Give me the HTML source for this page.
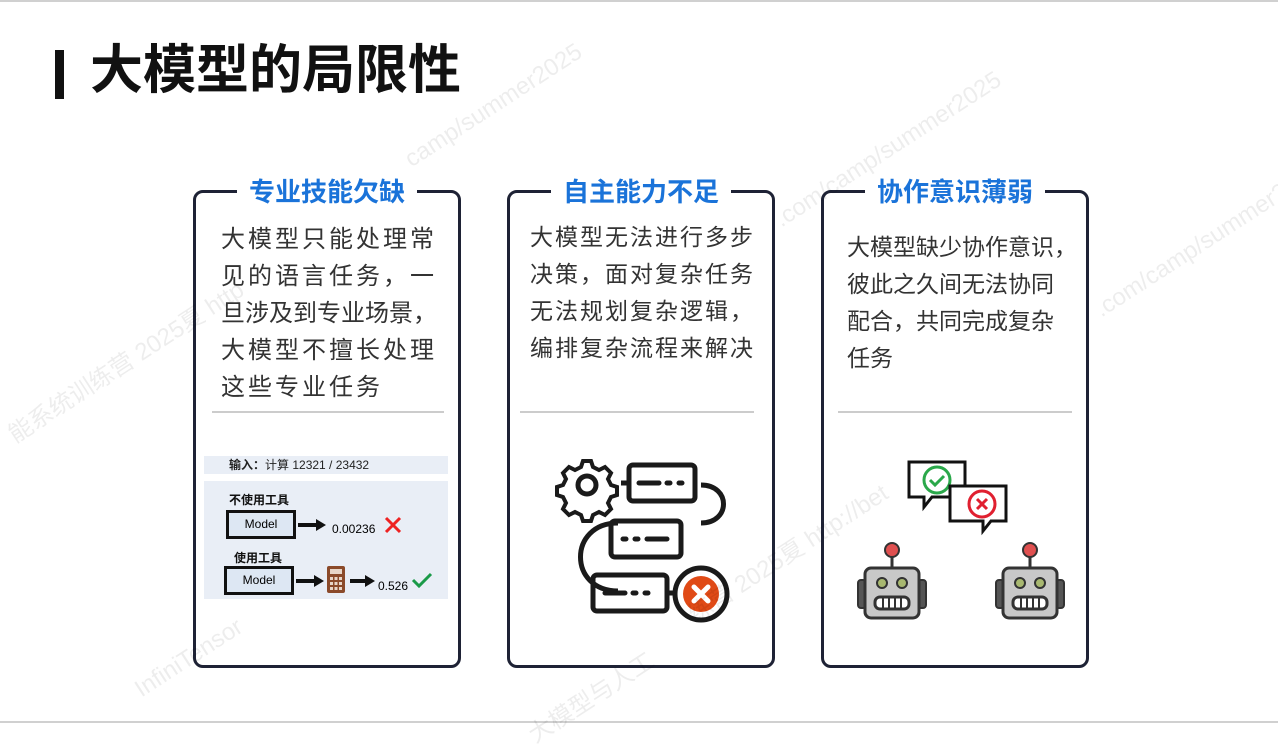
<!DOCTYPE html>
<html><head><meta charset="utf-8"><style>
body{margin:0;width:1278px;height:724px;background:#fff;position:relative;overflow:hidden;font-family:"Liberation Sans","Noto Sans CJK SC",sans-serif;}
.top{position:absolute;left:0;top:0;width:1278px;height:2px;background:#d0d0d0}
.bot{position:absolute;left:0;top:721px;width:1278px;height:2px;background:#d0d0d0}
.bar{position:absolute;left:55px;top:50px;width:9px;height:49px;background:#111}
h1{position:absolute;left:90px;top:40px;margin:0;font-size:53px;font-weight:bold;color:#111;line-height:62px;white-space:nowrap}
.card{position:absolute;top:190px;width:262px;height:472px;border:3px solid #1e2235;border-radius:10px}
.ct{position:absolute;top:-20px;left:0;right:0;text-align:center;white-space:nowrap}
.ct span{background:#fff;padding:0 12px;color:#1a73d9;font-size:26px;font-weight:bold;line-height:38px}
.txt{position:absolute;left:25px;top:28px;font-size:23px;line-height:37px;color:#333;white-space:nowrap}
.hr{position:absolute;left:16px;right:14px;top:218px;height:2px;background:#ccc}
.wm{position:absolute;color:rgba(0,0,0,0.07);font-size:24px;transform:rotate(-33deg);transform-origin:left top;white-space:nowrap}
</style></head><body>
<div class="top"></div><div class="bot"></div>
<div class="bar"></div><h1>大模型的局限性</h1>

<div class="card" style="left:193px">
<div class="ct"><span>专业技能欠缺</span></div>
<div class="txt" style="letter-spacing:3px;font-size:24px">大模型只能处理常<br>见的语言任务，一<br><span style="letter-spacing:0">旦涉及到专业场景，</span><br>大模型不擅长处理<br>这些专业任务</div>
<div class="hr"></div>
<div style="position:absolute;left:8px;top:263px;width:244px;height:18px;background:#e9eef6;font-size:12px;font-weight:bold;color:#222;line-height:18px;padding-left:25px;box-sizing:border-box">输入：<span style="font-weight:normal">计算 12321 / 23432</span></div>
<div style="position:absolute;left:8px;top:288px;width:244px;height:118px;background:#e9eef6"></div>
<div style="position:absolute;left:33px;top:298px;font-size:12px;font-weight:bold;color:#111">不使用工具</div>
<div style="position:absolute;left:30px;top:317px;border:3px solid #111;background:#dde7f3;font-size:12px;text-align:center;box-sizing:border-box;width:70px;height:29px;line-height:23px">Model</div>
<svg style="position:absolute;left:100px;top:320px" width="160" height="80"><path d="M2 12h20" stroke="#111" stroke-width="4"/><path d="M20 6l10 6-10 6z" fill="#111"/><text x="36" y="20" font-size="12" font-family="Liberation Sans">0.00236</text><path d="M90 5l14 14M104 5l-14 14" stroke="#e22" stroke-width="3"/>
<path d="M0 68h18" stroke="#111" stroke-width="4"/><path d="M18 62l10 6-10 6z" fill="#111"/>
<rect x="31" y="53" width="18" height="27" rx="2" fill="#8b4a2a"/><rect x="34" y="56" width="12" height="5" fill="#e8d6c8"/><g fill="#e8d6c8"><rect x="34" y="64" width="3" height="3"/><rect x="38.5" y="64" width="3" height="3"/><rect x="43" y="64" width="3" height="3"/><rect x="34" y="69" width="3" height="3"/><rect x="38.5" y="69" width="3" height="3"/><rect x="43" y="69" width="3" height="3"/><rect x="34" y="74" width="3" height="3"/><rect x="38.5" y="74" width="3" height="3"/><rect x="43" y="74" width="3" height="3"/></g>
<path d="M54 68h16" stroke="#111" stroke-width="4"/><path d="M69 62l10 6-10 6z" fill="#111"/><text x="82" y="77" font-size="12" font-family="Liberation Sans">0.526</text><path d="M117 67l6 6 12-12" stroke="#1a9a48" stroke-width="3" fill="none"/></svg>
<div style="position:absolute;left:38px;top:356px;font-size:12px;font-weight:bold;color:#111">使用工具</div>
<div style="position:absolute;left:28px;top:373px;width:70px;height:29px;border:3px solid #111;background:#dde7f3;font-size:12px;text-align:center;line-height:23px;box-sizing:border-box">Model</div>
</div>

<div class="card" style="left:507px">
<div class="ct"><span>自主能力不足</span></div>
<div class="txt" style="left:20px;top:26px;letter-spacing:2px">大模型无法进行多步<br>决策，面对复杂任务<br>无法规划复杂逻辑，<br>编排复杂流程来解决</div>
<div class="hr" style="left:10px;right:18px"></div>
<svg style="position:absolute;left:33px;top:250px" width="200" height="190" viewBox="540 440 200 190" fill="none" stroke="#1a1a1a" stroke-width="5">
<path d="M698 482c30 0 30 38 0 38M615 520c-50 0-50 68 0 68" stroke-width="5"/>
<rect x="626" y="462" width="66" height="36" rx="4"/><path d="M636 480h20M664 480h3M676 480h3" stroke-linecap="round"/>
<rect x="608" y="518" width="70" height="36" rx="4"/><path d="M620 536h3M632 536h3M644 536h20" stroke-linecap="round"/>
<rect x="590" y="572" width="74" height="36" rx="4"/><path d="M602 590h20M630 590h3M642 590h3" stroke-linecap="round"/>
<path d="M618 480h8M664 590h10"/>
<circle cx="584" cy="482" r="9"/>
<path d="M580 458h8l2 6 6 3 6-3 6 6-3 6 3 6 6 2v8l-6 2-3 6 3 6-6 6-6-3-6 3-2 6h-8l-2-6-6-3-6 3-6-6 3-6-3-6-6-2v-8l6-2 3-6-3-6 6-6 6 3 6-3z" stroke-width="4"/>
<circle cx="698" cy="591" r="26"/><circle cx="698" cy="591" r="18" fill="#e04a16" stroke="none"/>
<path d="M691 584l14 14M705 584l-14 14" stroke="#fff" stroke-width="5" stroke-linecap="round"/></svg>
</div>

<div class="card" style="left:821px">
<div class="ct"><span>协作意识薄弱</span></div>
<div class="txt" style="top:36px;left:23px">大模型缺少协作意识，<br>彼此之久间无法协同<br>配合，共同完成复杂<br>任务</div>
<div class="hr" style="top:218px;left:14px;right:14px"></div>
<svg style="position:absolute;left:19px;top:260px" width="230" height="180" viewBox="840 450 230 180">
<path d="M906 459h56v35h-33l-8 10v-10h-15z" fill="#fff" stroke="#111" stroke-width="3"/>
<circle cx="934" cy="477" r="13" fill="none" stroke="#2aa84a" stroke-width="3"/><path d="M927 477l5 5 9-9" stroke="#2aa84a" stroke-width="3" fill="none"/>
<path d="M947 483h56v35h-15l-8 10v-10h-33z" fill="#fff" stroke="#111" stroke-width="3"/>
<circle cx="979" cy="501" r="13" fill="none" stroke="#e02030" stroke-width="3"/><path d="M974 496l10 10M984 496l-10 10" stroke="#e02030" stroke-width="3"/>
<g id="r"><line x1="889" y1="548" x2="889" y2="566" stroke="#333" stroke-width="3"/><circle cx="889" cy="547" r="7" fill="#e05050" stroke="#333" stroke-width="2"/>
<rect x="855" y="577" width="8" height="28" rx="3" fill="#555" stroke="#333" stroke-width="2"/><rect x="915" y="577" width="8" height="28" rx="3" fill="#555" stroke="#333" stroke-width="2"/>
<rect x="862" y="565" width="54" height="50" rx="6" fill="#c8c8c8" stroke="#333" stroke-width="3"/>
<circle cx="879" cy="580" r="5" fill="#a8b870" stroke="#333" stroke-width="2"/><circle cx="899" cy="580" r="5" fill="#a8b870" stroke="#333" stroke-width="2"/>
<rect x="872" y="594" width="34" height="12" rx="5" fill="#fff" stroke="#333" stroke-width="3"/><path d="M880 594v12M886 594v12M892 594v12M898 594v12" stroke="#333" stroke-width="2"/></g>
<use href="#r" transform="translate(138 0)"/>
</svg>
</div>

<div class="wm" style="left:0;top:420px">能系统训练营 2025夏 http</div>
<div class="wm" style="left:400px;top:150px">camp/summer2025</div>
<div class="wm" style="left:770px;top:210px">.com/camp/summer2025</div>
<div class="wm" style="left:1090px;top:300px">.com/camp/summer2025</div>
<div class="wm" style="left:130px;top:680px">InfiniTensor</div>
<div class="wm" style="left:680px;top:600px">练营 2025夏 http://bet</div>
<div class="wm" style="left:520px;top:720px">大模型与人工</div>
</body></html>
